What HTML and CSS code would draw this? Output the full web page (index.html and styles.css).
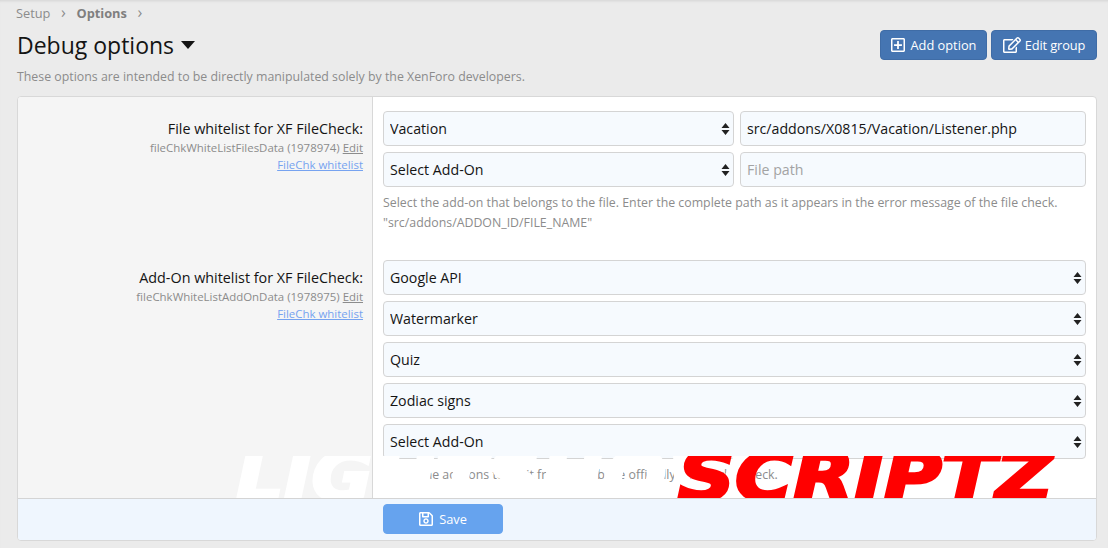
FILE: index.html
```html
<!DOCTYPE html>
<html lang="en">
<head>
  <meta charset="UTF-8" />
  <title>Debug options</title>
  <link rel="stylesheet" href="styles.css">
</head>
<body>
  <div class="breadcrumb">
    <a href="#">Setup</a><span class="sep">›</span><a href="#" class="current">Options</a><span class="sep">›</span>
  </div>

  <div class="header">
    <h1>Debug options <span class="caret"></span></h1>
    <div class="actions">
      <a href="#" class="button add">
        <svg class="icon" viewBox="0 0 448 512"><path d="M352 240v32c0 6.6-5.4 12-12 12h-88v88c0 6.6-5.4 12-12 12h-32c-6.6 0-12-5.4-12-12v-88h-88c-6.6 0-12-5.4-12-12v-32c0-6.6 5.4-12 12-12h88v-88c0-6.6 5.4-12 12-12h32c6.6 0 12 5.4 12 12v88h88c6.6 0 12 5.4 12 12zm96-160v352c0 26.5-21.5 48-48 48H48c-26.5 0-48-21.5-48-48V80c0-26.5 21.5-48 48-48h352c26.5 0 48 21.5 48 48zm-48 346V86c0-3.3-2.7-6-6-6H54c-3.3 0-6 2.7-6 6v340c0 3.3 2.7 6 6 6h340c3.3 0 6-2.7 6-6z"/></svg>
        Add option
      </a>
      <a href="#" class="button edit">
        <svg class="icon wide" viewBox="0 0 576 512"><path d="M402.3 344.9l32-32c5-5 13.7-1.5 13.7 5.7V464c0 26.5-21.5 48-48 48H48c-26.5 0-48-21.5-48-48V112c0-26.5 21.5-48 48-48h273.5c7.1 0 10.7 8.6 5.7 13.7l-32 32c-1.5 1.5-3.5 2.3-5.7 2.3H48v352h352V350.5c0-2.1.8-4.1 2.3-5.6zm156.6-201.8L296.3 405.7l-90.4 10c-26.2 2.9-48.5-19.2-45.6-45.6l10-90.4L432.9 17.1c22.9-22.9 59.9-22.9 82.7 0l43.2 43.2c22.9 22.9 22.9 60 .1 82.8zM460.1 174L402 115.9 216.2 301.8l-7.3 65.3 65.3-7.3L460.1 174zm64.8-79.7l-43.2-43.2c-4.1-4.1-10.8-4.1-14.8 0L436 82l58.1 58.1 30.9-30.9c4-4.2 4-10.8-.1-14.9z"/></svg>
        Edit group
      </a>
    </div>
  </div>
  <p class="description">These options are intended to be directly manipulated solely by the XenForo developers.</p>

  <form class="card">
    <div class="row first">
      <div class="label">
        <div class="title">File whitelist for XF FileCheck:</div>
        <div class="meta">fileChkWhiteListFilesData (1978974) <a href="#">Edit</a></div>
        <div class="meta"><a href="#" class="group-link">FileChk whitelist</a></div>
      </div>
      <div class="field">
        <div class="pair">
          <select><option>Vacation</option></select>
          <input type="text" value="src/addons/X0815/Vacation/Listener.php">
        </div>
        <div class="pair">
          <select><option>Select Add-On</option></select>
          <input type="text" placeholder="File path">
        </div>
        <div class="hint">Select the add-on that belongs to the file. Enter the complete path as it appears in the error message of the file check.<br>"src/addons/ADDON_ID/FILE_NAME"</div>
      </div>
    </div>

    <div class="row second">
      <div class="label">
        <div class="title">Add-On whitelist for XF FileCheck:</div>
        <div class="meta">fileChkWhiteListAddOnData (1978975) <a href="#">Edit</a></div>
        <div class="meta"><a href="#" class="group-link">FileChk whitelist</a></div>
      </div>
      <div class="field">
        <select><option>Google API</option></select>
        <select><option>Watermarker</option></select>
        <select><option>Quiz</option></select>
        <select><option>Zodiac signs</option></select>
        <select><option>Select Add-On</option></select>
        <div class="hint">Select the add-ons to omit from the above officially during the check.</div>
      </div>
    </div>

    <div class="footer">
      <div class="footer-side"></div>
      <button type="button" class="button save">
        <svg class="icon" viewBox="0 0 448 512"><path d="M433.941 129.941l-83.882-83.882A48 48 0 0 0 316.118 32H48C21.49 32 0 53.49 0 80v352c0 26.51 21.49 48 48 48h352c26.51 0 48-21.49 48-48V163.882a48 48 0 0 0-14.059-33.941zM272 80v80H144V80h128zm122 352H54a6 6 0 0 1-6-6V86a6 6 0 0 1 6-6h42v104c0 13.255 10.745 24 24 24h176c13.255 0 24-10.745 24-24V83.882l78.243 78.243a6 6 0 0 1 1.757 4.243V426a6 6 0 0 1-6 6zM224 232c-48.523 0-88 39.477-88 88s39.477 88 88 88 88-39.477 88-88-39.477-88-88-88zm0 128c-22.056 0-40-17.944-40-40s17.944-40 40-40 40 17.944 40 40-17.944 40-40 40z"/></svg>
        Save
      </button>
    </div>
  </form>

  <div class="watermark"><span class="wm-white">LIGHTSHOW</span><span class="wm-red">SCRIPTZ</span></div>
</body>
</html>
```

FILE: styles.css
```css
* {
  box-sizing: border-box;
}
html, body {
  height: 548px;
  overflow: hidden;
}
body {
  margin: 0;
  padding: 0 11px 0 17px;
  position: relative;
  font-family: 'Open Sans', 'Noto Sans', sans-serif;
  font-size: 14.2px;
  color: #141414;
  background: #ebebeb;
  box-shadow: inset 0 3px 3px -2px rgba(0,0,0,0.1);
}
a {
  color: inherit;
  text-decoration: none;
}

.breadcrumb {
  height: 26px;
  line-height: 24px;
  margin-left: -1px;
  font-size: 12.8px;
  color: #8c8c8c;
}
.breadcrumb .current {
  font-weight: 700;
  color: #7f7f7f;
}
.breadcrumb .sep {
  display: inline-block;
  width: 26px;
  text-align: center;
  font-size: 16px;
}

.header {
  display: flex;
  justify-content: space-between;
  height: 40px;
}
h1 {
  margin: 0;
  font-size: 23px;
  font-weight: 400;
  line-height: 38px;
}
.caret {
  display: inline-block;
  margin: 0 0 5px 1px;
  border: 7px solid transparent;
  border-top: 8px solid #141414;
  border-bottom: 0;
  vertical-align: middle;
}
.actions {
  display: flex;
  gap: 4px;
  margin-top: 4px;
}
.button {
  display: flex;
  align-items: center;
  justify-content: center;
  gap: 6px;
  height: 30px;
  padding: 0;
  font-family: inherit;
  font-size: 12.8px;
  color: #fff;
  background: #4575b2;
  border: 1px solid #3f6ca6;
  border-radius: 4px;
}
.button.add {
  width: 107px;
}
.button.edit {
  width: 106px;
  gap: 4px;
  letter-spacing: -0.1px;
}
.icon {
  width: 14px;
  height: 16px;
  fill: currentColor;
}
.icon.wide {
  width: 18px;
}

.description {
  margin: 0;
  height: 30px;
  padding-top: 2px;
  font-size: 12.35px;
  line-height: 18px;
  color: #8c8c8c;
}

.card {
  height: 445px;
  display: flex;
  flex-direction: column;
  background: #fff;
  border: 1px solid #d8d8d8;
  border-radius: 4px;
  overflow: hidden;
}
.row {
  display: grid;
  grid-template-columns: 355px 1fr;
}
.row.first {
  height: 149px;
}
.row.second {
  flex: 1;
  min-height: 0;
}
.label {
  padding: 14px 9px 0 10px;
  text-align: right;
  background: #f5f5f5;
  border-right: 1px solid #d8d8d8;
}
.title {
  line-height: 35px;
  margin-bottom: -7px;
  font-size: 14.35px;
}
.meta {
  font-size: 11.45px;
  line-height: 17px;
  color: #8c8c8c;
}
.meta a {
  text-decoration: underline;
}
.meta .group-link {
  color: #76a3f0;
}

.field {
  display: flex;
  flex-direction: column;
  gap: 6px;
  padding: 14px 10px 0 10px;
}
.pair {
  display: grid;
  grid-template-columns: 351px 346px;
  gap: 6px;
}
select, input {
  width: 100%;
  height: 35px;
  padding: 0 6px;
  font-family: inherit;
  font-size: 14.2px;
  color: #141414;
  background-color: #f6fafe;
  border: 1px solid #d4d4d4;
  border-radius: 4px;
}
select {
  appearance: none;
  background-image: url("data:image/svg+xml,%3Csvg xmlns='http://www.w3.org/2000/svg' width='9' height='14'%3E%3Cpath d='M4.5 1L8.5 6H.5zM4.5 13L.5 8h8z' fill='%23222'/%3E%3C/svg%3E");
  background-repeat: no-repeat;
  background-position: right 3px center;
}
input::placeholder {
  color: #a3a3a3;
}
.hint {
  font-size: 12.35px;
  line-height: 20px;
  color: #8c8c8c;
}

.footer {
  height: 42px;
  flex: none;
  display: grid;
  grid-template-columns: 365px 120px;
  align-items: start;
  padding-top: 5px;
  background: #eff6fe;
  border-top: 1px solid #d4d4d4;
}
.save {
  background: #66a3ee;
  border-color: #66a3ee;
}

/* banner pasted over the shot, letters cut off top and bottom */
.watermark {
  position: absolute;
  left: 236px;
  top: 456px;
  width: 830px;
  height: 42px;
  overflow: hidden;
  font-family: 'DejaVu Sans', sans-serif;
  font-weight: 700;
  font-style: italic;
  font-size: 68px;
  line-height: 42px;
  white-space: nowrap;
  -webkit-text-stroke: 3px currentColor;
}
.wm-white,
.wm-red {
  position: absolute;
  transform-origin: left center;
}
.wm-white {
  left: 0;
  color: #fff;
  transform: scaleX(1.1);
}
.wm-red {
  left: 442px;
  color: #f00;
  transform: scaleX(1.165);
}
```
